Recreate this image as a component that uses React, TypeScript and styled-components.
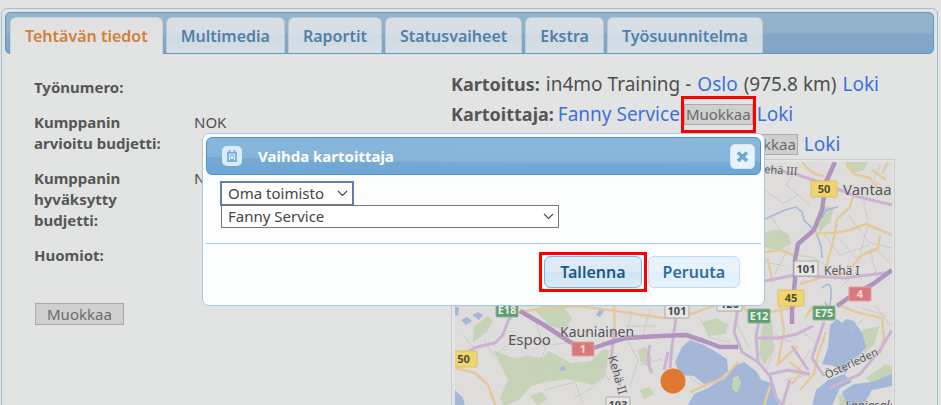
import React from "react";
import styled, { createGlobalStyle, css } from "styled-components";

const GlobalStyle = createGlobalStyle`
  * { box-sizing: border-box; }
  html, body { margin: 0; background: #e4e4e4; overflow: hidden; }
  body, button, select {
    font-family: "Noto Sans", "Open Sans", sans-serif;
    font-size: 15px;
    color: #4f4f4f;
  }
`;

const Page = styled.main`
  height: 100vh;
  padding: 8px 3px 0 1px;
  overflow: hidden;
`;

const TabsWidget = styled.section`
  padding: 3px;
  border: 1px solid #a3bfd3;
  border-radius: 6px;
  background: #e2e4e3;
`;

const TabBar = styled.nav`
  display: flex;
  gap: 3px;
  height: 42px;
  padding: 4px 4px 0;
  border: 1px solid #5c9ac8;
  border-radius: 5px;
  background: linear-gradient(#94b3cc 0, #91b0ca 50%, #84a9c7 54%, #7fa5c5 100%);
`;

const Tab = styled.button<{ $active?: boolean }>`
  height: 36px;
  padding: 0 14px;
  border: 1px solid #b6cad9;
  border-bottom: 0;
  border-radius: 6px 6px 0 0;
  background: linear-gradient(#d8dfe5 0, #d6dde4 48%, #cfdae3 52%, #d8dfe3 100%);
  color: #4f81a9;
  font-weight: 600;
  font-size: 16px;
  line-height: 24px;
  white-space: nowrap;
  ${(p) =>
    p.$active &&
    css`
      height: 37px;
      border-color: #c7d3dc;
      background: linear-gradient(#e0e0e0, #e2e4e3);
      color: #d2803a;
    `}
`;

const Panel = styled.div`
  display: grid;
  grid-template-columns: minmax(0, 417fr) minmax(0, 444fr);
  padding: 15px 39px 0 29px;
`;

const Details = styled.div`
  padding-top: 8px;
`;

const Fields = styled.dl`
  display: grid;
  grid-template-columns: 160px 1fr;
  row-gap: 14px;
  margin: 0;
  line-height: 21px;
`;

const Term = styled.dt`
  max-width: 145px;
  color: #565656;
  font-weight: 700;
`;

const Value = styled.dd`
  margin: 0;
`;

const GreyButton = styled.button<{ $wide?: boolean }>`
  height: ${(p) => (p.$wide ? 22 : 21)}px;
  padding: 0 ${(p) => (p.$wide ? 11 : 1)}px;
  border: 1px solid #a9a9a9;
  background: #cfcfcf;
  color: #6b6b6b;
  line-height: 19px;
`;

const DetailActions = styled.div`
  padding: 37px 1px 0;
`;

const Survey = styled.div`
  font-size: 19px;
`;

const SurveyLine = styled.p<{ $indent?: boolean; $tight?: boolean }>`
  display: flex;
  align-items: center;
  gap: ${(p) => (p.$tight ? 4 : 6)}px;
  height: 30px;
  margin: 0;
  padding-left: ${(p) => (p.$indent ? 278 : 0)}px;
  white-space: nowrap;
`;

const Label = styled.b`
  color: #565656;
  font-size: 18px;
`;

const Link = styled.a`
  color: #4070dc;
  text-decoration: none;
`;

const Highlight = styled.span<{ $x: number; $y: number }>`
  position: relative;
  display: inline-flex;
  &::after {
    content: "";
    position: absolute;
    inset: -${(p) => p.$y + 3}px -${(p) => p.$x + 3}px;
    border: 3px solid #f00;
    pointer-events: none;
  }
`;

const MapFrame = styled.div`
  height: 306px;
  padding: 2px 2px 2px 3px;
  border: 1px solid #cbcdcc;
  svg { display: block; width: 100%; height: 100%; }
`;

const Overlay = styled.div`
  position: fixed;
  inset: 0;
  display: flex;
  justify-content: center;
  align-items: flex-start;
  padding: 133px 0 0 26px;
`;

const Dialog = styled.section`
  width: 563px;
  padding: 3px;
  border: 1px solid #a6c9e2;
  border-radius: 7px;
  background: #fcfdfd;
`;

const DialogHeader = styled.header`
  display: flex;
  align-items: center;
  height: 38px;
  padding: 0 5px 0 15px;
  border: 1px solid #4297d7;
  border-radius: 6px;
  background: radial-gradient(ellipse 110% 25px at 70% 0, #8ab7db 0, #86b4d9 97%, #74aad5 100%, #6fa6d2 150%);
  color: #fff;
`;

const DialogTitle = styled.h2`
  flex: 1;
  margin: 0 0 0 16px;
  font-size: 15px;
  font-weight: 700;
`;

const IconTile = styled.span`
  display: grid;
  place-items: center;
  width: 20px;
  height: 20px;
  border-radius: 5px;
  background: #dcebf7;
`;

const CloseButton = styled.button`
  display: grid;
  place-items: center;
  width: 25px;
  height: 25px;
  padding: 0;
  border: 1px solid #d3e5f4;
  border-radius: 5px;
  background: #e8f2fa;
`;

const DialogBody = styled.div`
  display: flex;
  flex-direction: column;
  align-items: flex-start;
  padding: 7px 15px 15px;
`;

const SelectWrap = styled.span<{ $wide?: boolean }>`
  position: relative;
  display: block;
  width: ${(p) => (p.$wide ? 338 : 132)}px;
  max-width: 100%;
  svg {
    position: absolute;
    right: 5px;
    top: 8px;
    pointer-events: none;
  }
`;

const Select = styled.select<{ $focused?: boolean }>`
  appearance: none;
  display: block;
  width: 100%;
  height: 23px;
  padding: 0 6px;
  border: 1px solid #767676;
  border-radius: 0;
  background: #fff;
  color: #444;
  line-height: 21px;
  outline: ${(p) => (p.$focused ? "1px solid #4a87ee" : "none")};
`;

const DialogFooter = styled.footer`
  display: flex;
  justify-content: flex-end;
  gap: 6px;
  padding: 12px 21px 14px;
  border-top: 1px solid #a6c9e2;
`;

const DialogButton = styled.button<{ $primary?: boolean }>`
  height: 32px;
  padding: 0 ${(p) => (p.$primary ? 15 : 14)}px;
  border: 1px solid ${(p) => (p.$primary ? "#79b7e7" : "#c5dbec")};
  border-radius: 6px;
  background: ${(p) =>
    p.$primary
      ? "linear-gradient(#dfecf7 0, #dceaf5 48%, #d0e5f5 52%, #dbebf8 100%)"
      : "linear-gradient(#e9f3fc 0, #e7f2fb 48%, #dfeffc 52%, #e8f3fc 100%)"};
  color: ${(p) => (p.$primary ? "#1d5987" : "#2e6e9e")};
  font-weight: 600;
  font-size: 16px;
  line-height: 24px;
`;

const Chevron = () => (
  <svg width="11" height="7" viewBox="0 0 11 7" aria-hidden="true">
    <path d="M1 1l4.5 4.5L10 1" fill="none" stroke="#444" strokeWidth="1.1" />
  </svg>
);

const CalendarIcon = () => (
  <svg width="12" height="12" viewBox="0 0 12 12" aria-hidden="true">
    <path d="M1 2h10v10H1z" fill="#7fb1dc" />
    <path d="M3.500 0v2M8.500 0v2" stroke="#7fb1dc" strokeWidth="2" />
    <path d="M3 4h6v6H3z" fill="#dcebf7" />
    <path d="M4 5h4v5H4z" fill="#7fb1dc" />
    <path d="M6 6v3" stroke="#eef6fc" strokeWidth="2" />
  </svg>
);

const CloseIcon = () => (
  <svg width="13" height="13" viewBox="0 0 13 13" aria-hidden="true">
    <path d="M2 2.500l9 8.500M11 2.500L2 11" stroke="#6da8d5" strokeWidth="3.600" />
  </svg>
);

type BadgeKind = "yellow" | "green" | "red" | "white";
const badgeColors: Record<BadgeKind, [string, string, string]> = {
  yellow: ["#efd66c", "#d8c26b", "#4e4c3c"],
  green: ["#5f9c6f", "#8ab594", "#e8efe9"],
  red: ["#d9797b", "#e0a3a3", "#f3dede"],
  white: ["#e6e6e4", "#aaaaa8", "#4c4c4c"],
};

interface Badge {
  x: number;
  y: number;
  w: number;
  h: number;
  label: string;
  kind: BadgeKind;
}

const badges: Badge[] = [
  { x: 811, y: 181, w: 26, h: 16, label: "50", kind: "yellow" },
  { x: 794, y: 261, w: 24, h: 15, label: "101", kind: "white" },
  { x: 849, y: 287, w: 22, h: 14, label: "4", kind: "red" },
  { x: 778, y: 290, w: 26, h: 16, label: "45", kind: "yellow" },
  { x: 813, y: 306, w: 22, h: 14, label: "E75", kind: "green" },
  { x: 748, y: 309, w: 22, h: 14, label: "E12", kind: "green" },
  { x: 717, y: 296, w: 25, h: 15, label: "120", kind: "white" },
  { x: 665, y: 303, w: 24, h: 15, label: "101", kind: "white" },
  { x: 496, y: 303, w: 22, h: 14, label: "E18", kind: "green" },
  { x: 572, y: 342, w: 22, h: 14, label: "1", kind: "red" },
  { x: 450, y: 351, w: 27, h: 16, label: "50", kind: "yellow" },
  { x: 606, y: 397, w: 24, h: 15, label: "103", kind: "white" },
];

const woods = [
  "M765 233q12-8 24 2l2 8-10 7-16-2z",
  "M846 162l22 0-4 8-10 3-8-5z",
  "M822 205l12 3-4 14-10 10-4-10z",
  "M493 350l20 8 16-2 14 2 6-7 22 12 20-2 12-12 6 2-2 14-2 12-12 8-26-6-22 3-14 4-12 14-15 6-4-8 8-18z",
  "M534 310l12-6 18 4 8 10-6 12-16-4z",
  "M474 326l14-10 5 4-6 12-14 10z",
  "M638 350l8-3 6 12-4 8-8-6z",
  "M702 322l14-4 12 6-2 10-18 2z",
  "M763 318l9 2 2 30-10 15-5-10z",
  "M862 330l18-4-6 18-10 10z",
  "M866 378l20-14 6 2v12l-18 8z",
  "M838 396l14-6 6 6-4 9h-14z",
  "M640 390l10-3 4 7-10 5z",
  "M530 396l12-4 6 7-10 6z",
];

const waters = [
  "M675 362l7-15 8-7 14 5 12 7 11 7 1 12-10 9-14 4-10-8-14-1z",
  "M684 412l10-18 14-6 12-8 14-14 10-4 12 9 6 10 8 10 4 18z",
  "M830 325l7-6 5 4 4-4 8 2 8 12 4 14-8 10-8 3-4 14-12-8-12-2 6-16z",
  "M750 376l10 6 4 28h-14zM762 380l12 4 6 24h-14z",
  "M812 406l4-16 12-10 16-6 8 8-12 6-8 18zM842 392l12-8 18-2 20-8v12l-20 4-8 14-16 4z",
  "M596 315l5-8 3 4-4 6zM461 320l6-3 5 4-6 4zM472 315l6-3 5 3-4 5zM455 306l4 2-1 8-3-1zM455 390l8 8 2 8h-10z",
  "M559 368l5-2 2 4-5 1z",
];

const lanes = [
  "M765 190l18 14 16-10M800 165l-14 20 24 20M770 215l20 30-16 30M792 255l20 2 28 16M840 240l16 18 18-10 16 14M848 215l22 28 22 5M862 190l6 34-8 30M880 165l-6 14 18 18M870 250l8 30M765 262l20 4M824 235l16 20 30-10",
  "M535 318l8 28 30-4M548 340l-10 30M632 310l-6 28 12 22-8 26M650 310l-8 28M640 365l22-6M595 356l14 24M582 330l22 8M484 340l10 16 22-18M463 335l12 14M525 355l8 14 20-2M545 390l30-8 8 22M574 398l22-12M625 326l30 0",
  "M700 318l10 20 20 4M735 320l14 28M765 330l26 12M775 345l-8 24M800 330l18 14M810 350l-14 24M842 286l14-14M862 308l24 8M852 330l12-12M876 306l14 20M690 378l16 10M785 380l26-6",
];

const oranges = [
  "M802 162q10 14 22 14M853 197l-3 10-13 12-2 13M815 233h20l15-3 16-6 26 11M835 233l-4 16-6 22M880 235l-2 14-16 6-12 14-16 10M765 252l16-2 14 6M767 258l6 24M846 162l8 12 16 4 14 18M872 170l14 10M888 162l-6 12",
  "M518 312l30-4 30-2M577 306l40 5 46 7 32-5 20-8M614 305l1 35M455 368l20 5 13 12 8 22M740 302l12 16 18-2M690 392l14-6 20-8 14-16",
  "M780 306l4 24-6 34 20-18M790 362l12 10-10 12M800 390l14-16 4-20 8-22M805 318l8-12M836 304l20 8 26 6 2 20-4 16M770 312l26-5M770 386l-6 20M800 284l20-6",
];

const purples = [
  "M455 358l22-11 18-4 8-8 5-14 6-8M614 328l-3 34 9 24M676 318l-4 28-2 22M765 168l30 6 30 10 30 12 37 9M765 281l30-6 50 3 47-6",
  "M738 308l-4 24 8 20 16 10 12 14 6 22 8 8M758 362l-2-26 4-20M755 338l24 0 18-4 16-8M792 346l16 24M824 322l-12 36 12 18M770 374l18-4 22 4M668 352l-4 18M790 380l-8 26M892 330l-12 20-20 24-30 14M650 345q-4 16 2 28",
];

const motorways = [
  "M835 162l-9 20-4 28-8 20-16 14-3 16 0 20-3 30v14",
  "M520 311l24 14 26 17 18 8 20-7 18-5 34-2 26-1 18 6 16 6h18",
  "M837 306l14-10 22-12 19-14",
];

const CityMap = () => (
  <svg viewBox="455 162 437 300" preserveAspectRatio="xMidYMin slice" role="img" aria-label="Kartta">
    <defs>
      <filter id="soft" x="0" y="0" width="100%" height="100%">
        <feGaussianBlur stdDeviation="0.7" />
      </filter>
    </defs>
    <rect x="440" y="150" width="470" height="330" fill="#dedddb" />
    <g filter="url(#soft)">
      {woods.map((d) => <path key={d} d={d} fill="#c7d3b7" />)}
      {waters.map((d) => <path key={d} d={d} fill="#a5b7d8" />)}
      <path d="M733 378l5-3 3 8-4 10-5-4z" fill="#c7d3b7" />
      <path d="M765 219l20-9 11-3 6 5 2 8 12 12 5 14 1 12M838 207l-12 3-4 8M822 288q10-10 9 8t-6 6" fill="none" stroke="#a5b7d8" strokeWidth="1.500" />
      {lanes.map((d) => <path key={d} d={d} fill="none" stroke="#cbc9c9" strokeWidth="1" />)}
      {oranges.map((d) => <path key={d} d={d} fill="none" stroke="#e3c99b" strokeWidth="2.500" />)}
      {purples.map((d) => <path key={d} d={d} fill="none" stroke="#ccb3d3" strokeWidth="3" strokeLinejoin="round" />)}
      {motorways.map((d) => <path key={d} d={d} fill="none" stroke="#b193bf" strokeWidth="4.500" strokeLinejoin="round" />)}
    </g>
    {badges.map((b) => {
      const [fill, stroke, ink] = badgeColors[b.kind];
      return (
        <g key={`${b.x}-${b.y}`}>
          <rect x={b.x} y={b.y} width={b.w} height={b.h} rx="1" fill={fill} stroke={stroke} />
          <text x={b.x + b.w / 2} y={b.y + b.h / 2 + 4} textAnchor="middle" fontSize="11" fontWeight="700" fill={ink}>
            {b.label}
          </text>
        </g>
      );
    })}
    <g fill="#55555b" stroke="#dedddb" strokeWidth="1" paintOrder="stroke">
      <text x="843" y="195" fontSize="15">Vantaa</text>
      <text x="508" y="345" fontSize="15">Espoo</text>
      <text x="560" y="337" fontSize="14">Kauniainen</text>
      <text x="824" y="275" fontSize="12">Kehä I</text>
      <text transform="translate(764 173) rotate(4)" fontSize="11">ehä III</text>
      <text transform="translate(608 357) rotate(74)" fontSize="12">Kehä II</text>
      <text transform="translate(529 306) rotate(-12)" fontSize="11">Kehä</text>
      <text transform="translate(827 379) rotate(-25)" fontSize="11">Österleden</text>
      <text x="845" y="410" fontSize="12" fontStyle="italic">Laajasalo</text>
    </g>
    <circle cx="673" cy="381" r="12.500" fill="#df7831" />
  </svg>
);

const tabs = ["Tehtävän tiedot", "Multimedia", "Raportit", "Statusvaiheet", "Ekstra", "Työsuunnitelma"];

export default function App() {
  return (
    <>
      <GlobalStyle />
      <Page>
        <TabsWidget>
          <TabBar role="tablist">
            {tabs.map((name, i) => (
              <Tab key={name} role="tab" aria-selected={i === 0} $active={i === 0}>
                {name}
              </Tab>
            ))}
          </TabBar>
          <Panel>
            <Details>
              <Fields>
                <Term>Työnumero:</Term>
                <Value />
                <Term>Kumppanin arvioitu budjetti:</Term>
                <Value>NOK</Value>
                <Term>Kumppanin hyväksytty budjetti:</Term>
                <Value>NOK</Value>
                <Term>Huomiot:</Term>
                <Value />
              </Fields>
              <DetailActions>
                <GreyButton $wide>Muokkaa</GreyButton>
              </DetailActions>
            </Details>
            <Survey>
              <SurveyLine>
                <Label>Kartoitus:</Label>
                <span>in4mo Training -</span>
                <Link href="#oslo">Oslo</Link>
                <span>(975.8 km)</span>
                <Link href="#loki">Loki</Link>
              </SurveyLine>
              <SurveyLine $tight>
                <Label>Kartoittaja:</Label>
                <Link href="#fanny">Fanny Service</Link>
                <Highlight $x={0} $y={5}>
                  <GreyButton>Muokkaa</GreyButton>
                </Highlight>
                <Link href="#loki">Loki</Link>
              </SurveyLine>
              <SurveyLine $indent>
                <GreyButton>Muokkaa</GreyButton>
                <Link href="#loki">Loki</Link>
              </SurveyLine>
              <MapFrame>
                <CityMap />
              </MapFrame>
            </Survey>
          </Panel>
        </TabsWidget>
      </Page>
      <Overlay>
        <Dialog role="dialog" aria-labelledby="dialog-title">
          <DialogHeader>
            <IconTile>
              <CalendarIcon />
            </IconTile>
            <DialogTitle id="dialog-title">Vaihda kartoittaja</DialogTitle>
            <CloseButton aria-label="Sulje">
              <CloseIcon />
            </CloseButton>
          </DialogHeader>
          <DialogBody>
            <SelectWrap>
              <Select aria-label="Toimisto" $focused defaultValue="Oma toimisto">
                <option>Oma toimisto</option>
              </Select>
              <Chevron />
            </SelectWrap>
            <SelectWrap $wide>
              <Select aria-label="Kartoittaja" defaultValue="Fanny Service">
                <option>Fanny Service</option>
              </Select>
              <Chevron />
            </SelectWrap>
          </DialogBody>
          <DialogFooter>
            <Highlight $x={2} $y={1}>
              <DialogButton $primary>Tallenna</DialogButton>
            </Highlight>
            <DialogButton>Peruuta</DialogButton>
          </DialogFooter>
        </Dialog>
      </Overlay>
    </>
  );
}
